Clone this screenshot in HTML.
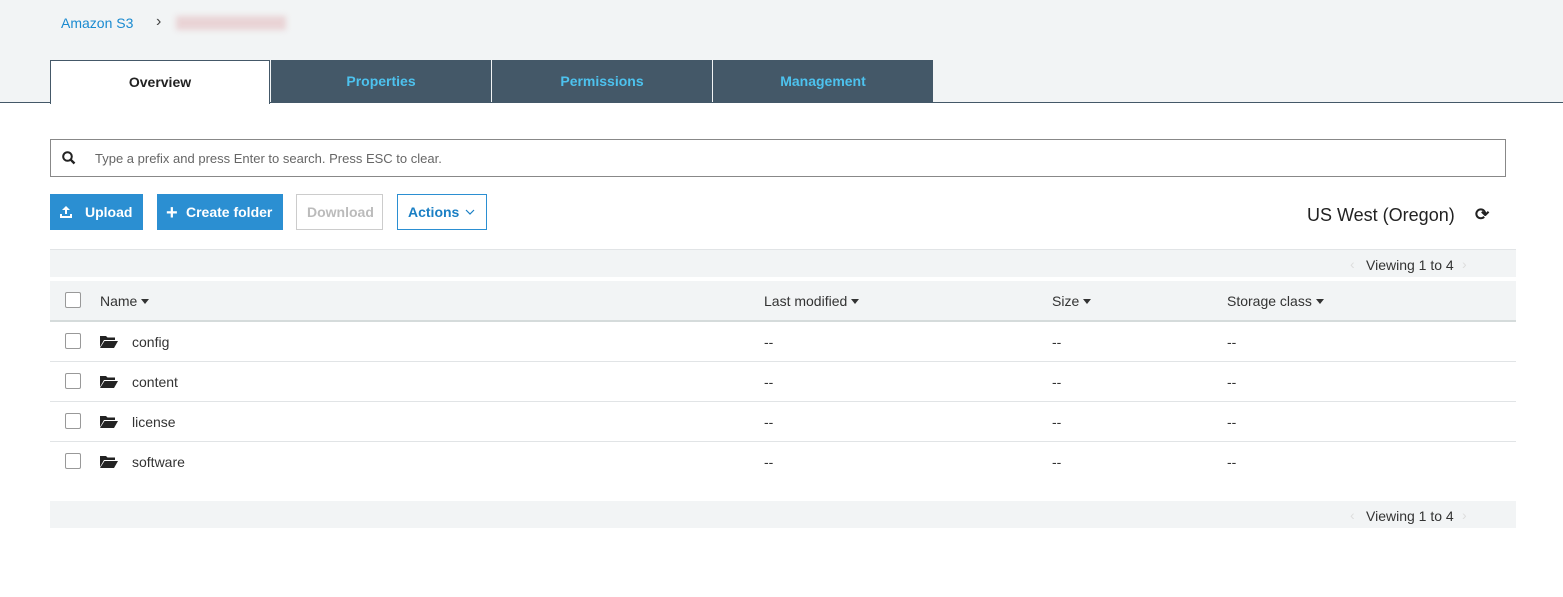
<!DOCTYPE html><html><head><style>
*{margin:0;padding:0;box-sizing:border-box}
body{width:1563px;height:597px;background:#fff;font-family:"Liberation Sans",Arial,sans-serif;font-size:14px;color:#333;position:relative;overflow:hidden}
.a{position:absolute;white-space:nowrap}
.hdr{left:0;top:0;width:1563px;height:103px;background:#f2f4f5;border-bottom:1px solid #445868}
.tab{top:60px;height:43px;width:220px;background:#445868;color:#4dc2ee;font-weight:bold;text-align:center;line-height:42px}
.btn{top:194px;height:36px;line-height:36px;font-weight:bold;padding:0 12px}
.cb{width:16px;height:16px;border:1px solid #999;background:#fff;border-radius:2px}
.row{left:50px;width:1466px;height:40px;border-bottom:1px solid #e1e4e6}
.c{position:absolute;top:12px;white-space:nowrap}
.bar{left:50px;width:1466px;height:28px;background:#f2f4f5;border-top:1px solid #e1e4e6;font-size:14px}
.tri{display:inline-block;width:0;height:0;border-left:4px solid transparent;border-right:4px solid transparent;border-top:5px solid #333;margin-left:4px;vertical-align:2px}
</style></head><body>
<div class="a hdr"></div>
<div class="a" style="left:61px;top:15px;color:#1a8ad0">Amazon S3</div>
<div class="a" style="left:156px;top:13px;color:#444;font-size:16px">›</div>
<div class="a" style="left:176px;top:16px;width:110px;height:14px;background:#e9d3d5;filter:blur(3px)"></div>
<div class="a tab" style="left:50px;background:#fff;color:#222;border:1px solid #445868;border-bottom:none;height:44px;line-height:43px">Overview</div>
<div class="a tab" style="left:271px">Properties</div>
<div class="a tab" style="left:492px">Permissions</div>
<div class="a tab" style="left:713px">Management</div>
<div class="a" style="left:50px;top:139px;width:1456px;height:38px;border:1px solid #888"></div>
<svg class="a" style="left:62px;top:151px" width="14" height="14" viewBox="0 0 14 14"><circle cx="5.5" cy="5.5" r="4.3" fill="none" stroke="#222" stroke-width="2"/><path d="M8.7 8.7L12.5 12.5" stroke="#222" stroke-width="2.4"/></svg>
<div class="a" style="left:95px;top:151px;color:#666;font-size:13px">Type a prefix and press Enter to search. Press ESC to clear.</div>
<div class="a btn" style="left:50px;width:93px;background:#2b8fd2;color:#fff;padding-left:35px">Upload</div>
<svg class="a" style="left:59px;top:205px" width="16" height="14" viewBox="0 0 16 14"><path d="M7 1L3 5h3v4h2V5h3z M1 9v4h12V9h-2v2H3V9z" fill="#fff"/></svg>
<div class="a btn" style="left:157px;width:126px;background:#2b8fd2;color:#fff;padding-left:29px;padding-right:0">Create folder</div>
<div class="a" style="left:166px;top:206px;color:#fff;font-weight:bold;font-size:20px;line-height:14px">+</div>
<div class="a btn" style="left:296px;width:87px;border:1px solid #ccc;color:#bbb;padding-left:10px;padding-right:0;line-height:34px">Download</div>
<div class="a btn" style="left:397px;width:90px;border:1px solid #2b8fd2;color:#1a7fc4;padding-left:10px;padding-right:0;line-height:34px">Actions</div>
<svg class="a" style="left:465px;top:209px" width="10" height="6" viewBox="0 0 10 6"><path d="M1 1l4 4 4-4" fill="none" stroke="#1a7fc4" stroke-width="1.2"/></svg>
<div class="a" style="left:1307px;top:205px;font-size:18px;color:#222">US West (Oregon)</div>
<div class="a" style="left:1475px;top:205px;font-size:17px;font-weight:bold;color:#222">&#10227;</div>
<div class="a bar" style="top:249px"><span style="position:absolute;left:1316px;top:7px;color:#333">Viewing 1 to 4</span><span style="position:absolute;left:1300px;top:6px;color:#ddd">‹</span><span style="position:absolute;left:1412px;top:6px;color:#ddd">›</span></div>
<div class="a" style="left:50px;top:281px;width:1466px;height:41px;background:#f2f4f5;border-bottom:2px solid #d5dbdb">
<div class="cb c" style="left:15px;top:11px"></div>
<div class="c" style="left:50px">Name<span class="tri"></span></div>
<div class="c" style="left:714px">Last modified<span class="tri"></span></div>
<div class="c" style="left:1002px">Size<span class="tri"></span></div>
<div class="c" style="left:1177px">Storage class<span class="tri"></span></div>
</div>
<div class="a row" style="top:322px"><div class="cb c" style="left:15px;top:11px"></div><svg class="c" style="left:50px;top:13px" width="18" height="13" viewBox="0 0 18 13"><path d="M0 1h6l1.5 1.5H15v2.5H4L0 12z M4.5 6H18l-4 7H0z" fill="#222"/></svg><div class="c" style="left:82px">config</div><div class="c" style="left:714px">--</div><div class="c" style="left:1002px">--</div><div class="c" style="left:1177px">--</div></div>
<div class="a row" style="top:362px"><div class="cb c" style="left:15px;top:11px"></div><svg class="c" style="left:50px;top:13px" width="18" height="13" viewBox="0 0 18 13"><path d="M0 1h6l1.5 1.5H15v2.5H4L0 12z M4.5 6H18l-4 7H0z" fill="#222"/></svg><div class="c" style="left:82px">content</div><div class="c" style="left:714px">--</div><div class="c" style="left:1002px">--</div><div class="c" style="left:1177px">--</div></div>
<div class="a row" style="top:402px"><div class="cb c" style="left:15px;top:11px"></div><svg class="c" style="left:50px;top:13px" width="18" height="13" viewBox="0 0 18 13"><path d="M0 1h6l1.5 1.5H15v2.5H4L0 12z M4.5 6H18l-4 7H0z" fill="#222"/></svg><div class="c" style="left:82px">license</div><div class="c" style="left:714px">--</div><div class="c" style="left:1002px">--</div><div class="c" style="left:1177px">--</div></div>
<div class="a row" style="top:442px;border-bottom:none"><div class="cb c" style="left:15px;top:11px"></div><svg class="c" style="left:50px;top:13px" width="18" height="13" viewBox="0 0 18 13"><path d="M0 1h6l1.5 1.5H15v2.5H4L0 12z M4.5 6H18l-4 7H0z" fill="#222"/></svg><div class="c" style="left:82px">software</div><div class="c" style="left:714px">--</div><div class="c" style="left:1002px">--</div><div class="c" style="left:1177px">--</div></div>
<div class="a bar" style="top:501px;border-top:none;height:27px"><span style="position:absolute;left:1316px;top:7px;color:#333">Viewing 1 to 4</span><span style="position:absolute;left:1300px;top:6px;color:#ddd">‹</span><span style="position:absolute;left:1412px;top:6px;color:#ddd">›</span></div>
</body></html>
